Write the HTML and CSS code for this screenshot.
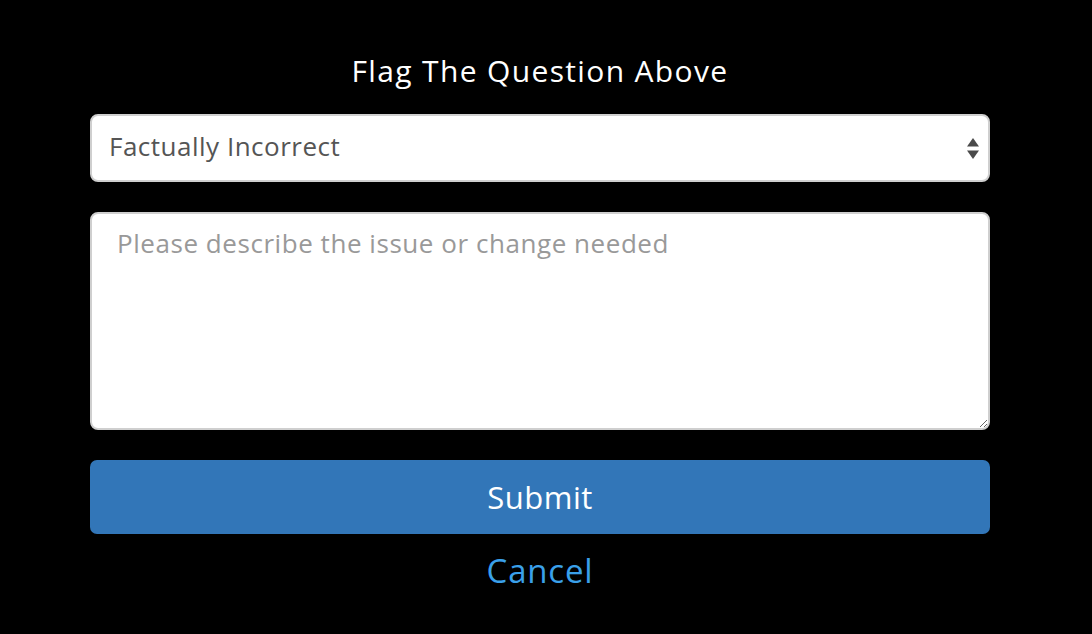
FILE: index.html
```html
<!DOCTYPE html>
<html lang="en">
<head>
<meta charset="utf-8">
<title>Flag The Question Above</title>
<link rel="stylesheet" href="styles.css">
</head>
<body>
<form class="flag-form">
  <h1 class="flag-title">Flag The Question Above</h1>
  <div class="select-wrap">
    <select class="flag-select">
      <option>Factually Incorrect</option>
      <option>Typo</option>
      <option>Other</option>
    </select>
    <svg class="select-arrows" width="12" height="21" viewBox="0 0 12 21" aria-hidden="true">
      <path d="M6 0 L12 8.5 L0 8.5 Z" fill="#4a4a4a"/>
      <path d="M0 12.5 L12 12.5 L6 21 Z" fill="#4a4a4a"/>
    </svg>
  </div>
  <textarea class="flag-text" placeholder="Please describe the issue or change needed"></textarea>
  <button type="button" class="btn-submit">Submit</button>
  <a class="link-cancel" href="#">Cancel</a>
</form>
</body>
</html>
```
FILE: styles.css
```css
html, body {
  margin: 0;
  padding: 0;
  background: #000;
}
body {
  font-family: "Open Sans", Lato, sans-serif;
}
.flag-form {
  width: 900px;
  margin: 0 0 0 90px;
  padding-top: 52px;
  display: flex;
  flex-direction: column;
  align-items: stretch;
}
.flag-title {
  margin: 0 0 24px;
  text-align: center;
  color: #fff;
  font-weight: 400;
  font-size: 30px;
  letter-spacing: 1.35px;
  line-height: 38px;
}
.select-wrap {
  position: relative;
  height: 68px;
}
.flag-select {
  -webkit-appearance: none;
  appearance: none;
  width: 100%;
  height: 68px;
  box-sizing: border-box;
  border: 2px solid #cfcfcf;
  border-radius: 8px;
  background: #fff;
  padding: 0 50px 4px 17px;
  font-family: inherit;
  font-size: 26px;
  letter-spacing: 0.5px;
  color: #555;
  outline: none;
}
.select-arrows {
  position: absolute;
  right: 11px;
  top: 24px;
}
.flag-text {
  margin-top: 30px;
  width: 100%;
  height: 218px;
  box-sizing: border-box;
  border: 2px solid #cfcfcf;
  border-radius: 8px;
  background: #fff;
  padding: 12px 25px;
  font-family: inherit;
  font-size: 26px;
  letter-spacing: 0.55px;
  line-height: 34px;
  color: #555;
  resize: vertical;
  outline: none;
}
.flag-text::placeholder {
  color: #999;
}
.btn-submit {
  margin-top: 30px;
  height: 74px;
  border: none;
  border-radius: 7px;
  background: #3276b8;
  color: #fff;
  font-family: inherit;
  font-size: 31px;
  letter-spacing: 0.5px;
  cursor: pointer;
}
.link-cancel {
  margin-top: 17px;
  align-self: center;
  color: #3aa0ea;
  font-size: 33px;
  letter-spacing: 0.8px;
  line-height: 40px;
  text-decoration: none;
}
```
